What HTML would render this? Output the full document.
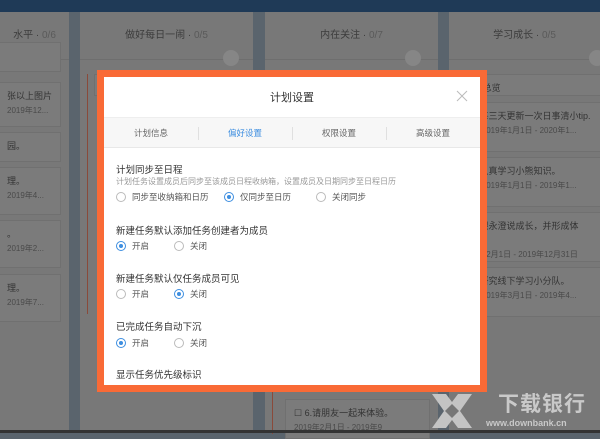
<!DOCTYPE html>
<html><head><meta charset="utf-8"><style>
*{margin:0;padding:0;box-sizing:border-box}
body{width:600px;height:433px;overflow:hidden;background:#5a646d;font-family:"Liberation Sans","Noto Sans CJK SC",sans-serif;position:relative}
.top{position:absolute;left:0;top:0;width:600px;height:12px;background:#1f3a57}
.col{position:absolute;top:12px;height:421px;background:#787878}
.ch{position:absolute;left:0;right:0;top:0;height:48px;border-bottom:1px solid #6e6e6e;font-size:10px;color:#3c3c3c;text-align:center;line-height:48px}
.ch span{color:#5a5a5a}
.plus{position:absolute;top:38px;width:16px;height:16px;border-radius:50%;background:#868686}
.card{position:absolute;background:#7b7b7b;border:1px solid #707070;font-size:9px;color:#333;padding:6px 8px;line-height:14px}
.d{color:#4a4a4a;font-size:8px}
.ln{position:absolute;width:1px;background:#8a4a3a}
.modal{position:absolute;left:97px;top:70px;width:390px;height:322px;background:#f96a36;padding:7px}
.inner{background:#fff;width:376px;height:308px;position:relative;overflow:hidden}
.title{height:40px;text-align:center;line-height:42px;font-size:11px;color:#333}
.x{position:absolute;right:12px;top:13px;width:12px;height:12px}
.tabs{height:31px;background:#f7f7f7;border-top:1px solid #eee;border-bottom:1px solid #e8e8e8;display:flex}
.tabs div{flex:1;text-align:center;font-size:8.5px;color:#666;line-height:31px;position:relative}
.tabs div+div:before{content:"";position:absolute;left:0;top:9px;height:13px;width:1px;background:#e0e0e0}
.tabs .a{color:#3d8ee0}
.h{font-size:9.5px;color:#333;position:absolute;left:12px}
.s{font-size:8px;color:#999;position:absolute;left:12px}
.r{position:absolute;font-size:8.5px;color:#555;line-height:11px}
.r i{display:inline-block;width:10px;height:10px;border:1px solid #bbb;border-radius:50%;vertical-align:-2px;margin-right:6px;position:relative}
.r i.on{border-color:#3d8ee0}
.r i.on:after{content:"";position:absolute;left:2px;top:2px;width:4px;height:4px;border-radius:50%;background:#3d8ee0}
.wm{position:absolute;left:498px;top:388px;font-size:21px;font-weight:bold;color:#c9c9c9;letter-spacing:1px}
.wm2{position:absolute;left:486px;top:418px;font-size:9px;color:#c9c9c9;font-weight:bold}
.bot{position:absolute;left:0;top:430px;width:600px;height:3px;background:#333}
</style></head><body>
<div class="top"></div>
<div class="col" style="left:0;width:69px"><div class="ch">水平 · <span>0/6</span></div><div class="plus" style="left:38px"></div>
<div class="card" style="left:-2px;top:30px;width:63px;height:30px"></div>
<div class="card" style="left:-2px;top:70px;width:63px;height:45px">张以上图片<br><span class="d">2019年12...</span></div>
<div class="card" style="left:-2px;top:120px;width:63px;height:30px">园。</div>
<div class="card" style="left:-2px;top:155px;width:63px;height:48px">理。<br><span class="d">2019年4...</span></div>
<div class="card" style="left:-2px;top:208px;width:63px;height:48px">。<br><span class="d">2019年2...</span></div>
<div class="card" style="left:-2px;top:262px;width:63px;height:48px">理。<br><span class="d">2019年7...</span></div>
</div>
<div class="col" style="left:80px;width:173px"><div class="ch">做好每日一闹 · <span>0/5</span></div><div class="plus" style="left:143px"></div>
<div class="ln" style="left:7px;top:62px;height:240px"></div>
<div class="card" style="left:14px;top:62px;width:150px;height:22px">☐ 总览</div></div>
<div class="col" style="left:265px;width:173px"><div class="ch">内在关注 · <span>0/7</span></div><div class="plus" style="left:140px"></div>
<div class="ln" style="left:7px;top:62px;height:360px"></div>
<div class="card" style="left:14px;top:62px;width:150px;height:22px">☐ 总览</div>
<div class="card" style="left:20px;top:387px;width:145px;height:40px">☐ 6.请朋友一起来体验。<br><span class="d">2019年2月1日 - 2019年9</span></div></div>
<div class="col" style="left:449px;width:151px"><div class="ch">学习成长 · <span>0/5</span></div><div class="plus" style="left:140px"></div>
<div class="ln" style="left:7px;top:62px;height:20px"></div>
<div class="card" style="left:14px;top:62px;width:140px;height:22px">☐ 总览</div>
<div class="card" style="left:14px;top:90px;width:140px;height:50px">1.每三天更新一次日事清小tip.<br><span class="d">▭ 2019年1月1日 - 2020年1...</span></div>
<div class="card" style="left:14px;top:145px;width:140px;height:50px">2.认真学习小熊知识。<br><span class="d">▭ 2019年1月1日 - 2019年1...</span></div>
<div class="card" style="left:14px;top:200px;width:140px;height:50px">3.跟永澄说成长，并形成体系。<br><span class="d">▭ 12月1日 - 2019年12月31日</span></div>
<div class="card" style="left:14px;top:255px;width:140px;height:50px">4.研究线下学习小分队。<br><span class="d">▭ 2019年3月1日 - 2019年4...</span></div></div>
<div class="modal"><div class="inner">
<div class="title">计划设置</div>
<svg class="x" viewBox="0 0 12 12"><path d="M1 1L11 11M11 1L1 11" stroke="#bbb" stroke-width="1"/></svg>
<div class="tabs"><div>计划信息</div><div class="a">偏好设置</div><div>权限设置</div><div>高级设置</div></div>
<div class="h" style="top:85px">计划同步至日程</div>
<div class="s" style="top:99px">计划任务设置成员后同步至该成员日程收纳箱，设置成员及日期同步至日程日历</div>
<div class="r" style="left:12px;top:115px"><i></i>同步至收纳箱和日历</div>
<div class="r" style="left:120px;top:115px"><i class="on"></i>仅同步至日历</div>
<div class="r" style="left:212px;top:115px"><i></i>关闭同步</div>
<div class="h" style="top:146px">新建任务默认添加任务创建者为成员</div>
<div class="r" style="left:12px;top:164px"><i class="on"></i>开启</div>
<div class="r" style="left:70px;top:164px"><i></i>关闭</div>
<div class="h" style="top:194px">新建任务默认仅任务成员可见</div>
<div class="r" style="left:12px;top:212px"><i></i>开启</div>
<div class="r" style="left:70px;top:212px"><i class="on"></i>关闭</div>
<div class="h" style="top:242px">已完成任务自动下沉</div>
<div class="r" style="left:12px;top:261px"><i class="on"></i>开启</div>
<div class="r" style="left:70px;top:261px"><i></i>关闭</div>
<div class="h" style="top:290px">显示任务优先级标识</div>
</div></div>
<svg style="position:absolute;left:430px;top:392px" width="44" height="38" viewBox="0 0 44 38"><path d="M2 2H16L22 10L28 2H42L30 19L42 36H28L22 28L16 36H2L14 19Z" fill="#c4c4c4"/><path d="M22 12L29 19L22 26L15 19Z" fill="#777"/></svg>
<div class="wm">下载银行</div>
<div class="wm2">www.downbank.cn</div>
<div class="bot"></div>
</body></html>
